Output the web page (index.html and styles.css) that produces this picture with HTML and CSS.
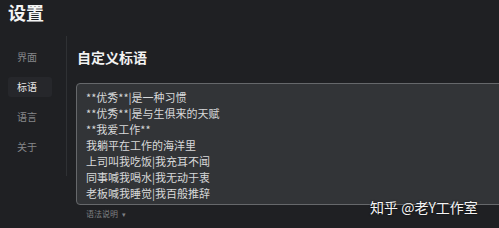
FILE: index.html
```html
<!DOCTYPE html>
<html lang="zh-CN">
<head>
<meta charset="utf-8">
<title>设置</title>
<link rel="stylesheet" href="styles.css">
</head>
<body>
<div class="page">
  <header class="title">设置</header>
  <div class="main">
    <nav class="sidebar">
      <div class="nav-item">界面</div>
      <div class="nav-item active">标语</div>
      <div class="nav-item">语言</div>
      <div class="nav-item">关于</div>
    </nav>
    <section class="content">
      <h2 class="heading">自定义标语</h2>
      <div class="editor">
        <div class="line">**优秀**|是一种习惯</div>
        <div class="line">**优秀**|是与生俱来的天赋</div>
        <div class="line">**我爱工作**</div>
        <div class="line">我躺平在工作的海洋里</div>
        <div class="line">上司叫我吃饭|我充耳不闻</div>
        <div class="line">同事喊我喝水|我无动于衷</div>
        <div class="line">老板喊我睡觉|我百般推辞</div>
      </div>
      <div class="help">语法说明 <span class="caret">▾</span></div>
    </section>
  </div>
  <div class="watermark">知乎 @老Y工作室</div>
</div>
</body>
</html>
```
FILE: styles.css
```css
html, body {
  margin: 0;
  padding: 0;
  background: #1f2023;
  overflow: hidden;
}
.page {
  position: relative;
  width: 499px;
  height: 228px;
  overflow: hidden;
  font-family: "Noto Sans CJK SC", "Noto Sans", sans-serif;
  color: #d6d7d8;
}
.title {
  height: 36px;
  line-height: 24px;
  padding-left: 8px;
  font-size: 18px;
  font-weight: 700;
  color: #f4f4f4;
}
.main {
  display: flex;
  align-items: flex-start;
}
.sidebar {
  width: 67px;
  height: 140px;
  border-right: 1px solid #2f3134;
  box-sizing: border-box;
  padding-top: 11px;
  display: flex;
  flex-direction: column;
  gap: 10px;
  flex-shrink: 0;
}
.nav-item {
  margin-left: 8px;
  width: 44px;
  height: 20px;
  line-height: 20px;
  padding-left: 9px;
  box-sizing: border-box;
  font-size: 10px;
  color: #85878a;
  border-radius: 3px;
}
.nav-item.active {
  background: #26272b;
  color: #e4e4e5;
}
.content {
  padding-left: 10px;
  flex-shrink: 0;
}
.heading {
  margin: 11px 0 0 0;
  height: 20px;
  line-height: 20px;
  font-size: 14px;
  font-weight: 700;
  color: #f2f2f2;
}
.editor {
  margin-top: 16px;
  margin-left: -1px;
  width: 440px;
  height: 122px;
  box-sizing: border-box;
  border: 1px solid #66686b;
  border-radius: 4px;
  background: #323437;
  padding: 5px 0 0 9px;
}
.line {
  font-size: 11px;
  line-height: 16px;
  height: 16px;
  color: #d8d9da;
  white-space: nowrap;
}
.help {
  margin-top: 1px;
  margin-left: 9px;
  height: 16px;
  line-height: 16px;
  font-size: 8px;
  color: #7f8083;
}
.caret {
  font-size: 7px;
  margin-left: 2px;
}
.watermark {
  position: absolute;
  left: 370px;
  top: 197px;
  font-size: 14px;
  line-height: 20px;
  color: #f4f4f4;
  text-shadow: 0 0 2px rgba(0,0,0,0.8);
  white-space: nowrap;
}
```
